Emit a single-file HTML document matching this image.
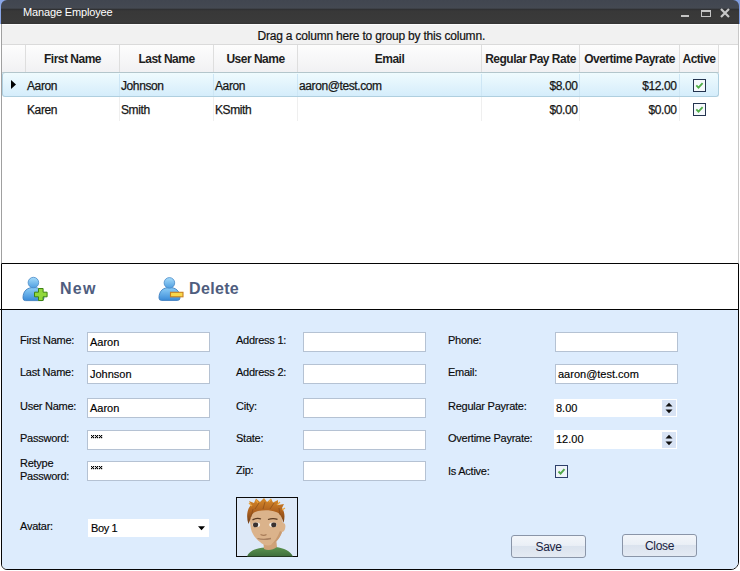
<!DOCTYPE html>
<html><head><meta charset="utf-8">
<style>
*{margin:0;padding:0;box-sizing:border-box}
html,body{width:740px;height:571px;overflow:hidden;background:#fff;font-family:"Liberation Sans",sans-serif}
.a{position:absolute}
.hdr{top:45px;height:28px;background:linear-gradient(#fdfdfd,#f1f1f3);border-right:1px solid #dedede;border-bottom:1px solid #c3cfd4;font-weight:bold;font-size:12px;color:#1e1e1e;text-align:center;line-height:28px;white-space:nowrap;letter-spacing:-0.5px}
.cell{height:24px;line-height:26px;font-size:12px;color:#161616;-webkit-text-stroke:0.25px #161616;white-space:nowrap;letter-spacing:-0.4px}
.vl{width:1px;background:#efefef}
.lbl{font-size:11px;color:#0a0a0a;-webkit-text-stroke:0.15px #0a0a0a;white-space:nowrap;letter-spacing:-0.25px;line-height:15px}
.tb{-webkit-text-stroke:0.15px #000;background:#fff;border:1px solid #b5c2d3;height:20px;width:123px;font-size:11px;color:#000;padding-left:2px;line-height:18px;white-space:nowrap}
.btn{border:1px solid #8a95a8;border-radius:3px;background:linear-gradient(#f3f6fa 0%,#eaeff6 45%,#dbe3ee 50%,#e4eaf3 100%);font-size:12px;text-align:center;line-height:22px;color:#1a2340;letter-spacing:-0.3px}
.tbt{font-size:16px;font-weight:bold;color:#4f5d7e;letter-spacing:0.9px;white-space:nowrap}
</style></head><body>

<!-- title bar -->
<div class="a" style="left:0;top:0;width:740px;height:1px;background:#52565e"></div>
<div class="a" style="left:0;top:0;width:62px;height:1px;background:#8fa8e0"></div>
<div class="a" style="left:62px;top:0;width:58px;height:1px;background:#b8bcc6"></div>
<div class="a" style="left:690px;top:0;width:50px;height:1px;background:#7a98dc"></div>
<div class="a" style="left:0;top:0;width:8px;height:24px;background:#8aa6e6"></div>
<div class="a" style="left:732px;top:0;width:8px;height:24px;background:#7f9de0"></div>
<div class="a" style="left:1px;top:0px;width:738px;height:24px;background:linear-gradient(#414650 0px,#444952 8px,#303133 9.5px,#383838 11px,#3a3a3a 22px,#333 24px);border-top-left-radius:6px;border-top-right-radius:6px"></div>
<div class="a" style="left:23px;top:6px;color:#fff;font-size:11px;white-space:nowrap;letter-spacing:-0.15px">Manage Employee</div>
<div class="a" style="left:681px;top:15px;width:8px;height:2px;background:#c4c4c4"></div>
<div class="a" style="left:701px;top:10px;width:10px;height:7px;border:1px solid #c4c4c4;border-top:2px solid #c4c4c4"></div>
<svg class="a" style="left:720px;top:8px" width="10" height="10" viewBox="0 0 10 10"><path d="M1 1L9 9M9 1L1 9" stroke="#c8c8c8" stroke-width="2.2"/></svg>

<!-- grid frame -->
<div class="a" style="left:1px;top:24px;width:1px;height:240px;background:#a0a0a0"></div>
<div class="a" style="left:738px;top:24px;width:1px;height:240px;background:#c8c8c8"></div>
<div class="a" style="left:2px;top:24px;width:736px;height:21px;background:#f1f1f1;border-top:1px solid #fcfcfc;border-bottom:1px solid #dadada"></div>
<div class="a" style="left:257.5px;top:29px;font-size:12px;color:#111;-webkit-text-stroke:0.2px #111;white-space:nowrap;letter-spacing:-0.2px">Drag a column here to group by this column.</div>

<!-- headers -->
<div class="a hdr" style="left:2px;width:24px"></div>
<div class="a hdr" style="left:26px;width:94px">First Name</div>
<div class="a hdr" style="left:120px;width:94px">Last Name</div>
<div class="a hdr" style="left:214px;width:84px">User Name</div>
<div class="a hdr" style="left:298px;width:184px">Email</div>
<div class="a hdr" style="left:482px;width:98px">Regular Pay Rate</div>
<div class="a hdr" style="left:580px;width:100px">Overtime Payrate</div>
<div class="a hdr" style="left:680px;width:39px">Active</div>

<!-- row lines -->
<div class="a vl" style="left:119px;top:97px;height:24px"></div>
<div class="a vl" style="left:213px;top:97px;height:24px"></div>
<div class="a vl" style="left:297px;top:97px;height:24px"></div>
<div class="a vl" style="left:481px;top:97px;height:24px"></div>
<div class="a vl" style="left:579px;top:97px;height:24px"></div>
<div class="a vl" style="left:679px;top:97px;height:24px"></div>

<!-- selected row -->
<div class="a" style="left:2px;top:72px;width:717px;height:25px;border:1px solid #afcfdf;border-top-color:#b3c6cc;border-radius:3px;background:linear-gradient(#effbfe,#d5edfb)"></div>
<div class="a" style="left:119px;top:74px;width:1px;height:22px;background:#cde6f5"></div>
<div class="a" style="left:213px;top:74px;width:1px;height:22px;background:#cde6f5"></div>
<div class="a" style="left:297px;top:74px;width:1px;height:22px;background:#cde6f5"></div>
<div class="a" style="left:481px;top:74px;width:1px;height:22px;background:#cde6f5"></div>
<div class="a" style="left:579px;top:74px;width:1px;height:22px;background:#cde6f5"></div>
<div class="a" style="left:679px;top:74px;width:1px;height:22px;background:#cde6f5"></div>
<svg class="a" style="left:11px;top:80px" width="6" height="10" viewBox="0 0 6 10"><path d="M0 0L5 4.5L0 9Z" fill="#000"/></svg>

<div class="a cell" style="left:27px;top:73px">Aaron</div>
<div class="a cell" style="left:121px;top:73px">Johnson</div>
<div class="a cell" style="left:215px;top:73px">Aaron</div>
<div class="a cell" style="left:299px;top:73px">aaron@test.com</div>
<div class="a cell" style="left:482px;top:73px;width:95.5px;text-align:right">$8.00</div>
<div class="a cell" style="left:580px;top:73px;width:96.5px;text-align:right">$12.00</div>

<div class="a cell" style="left:27px;top:97px">Karen</div>
<div class="a cell" style="left:121px;top:97px">Smith</div>
<div class="a cell" style="left:215px;top:97px">KSmith</div>
<div class="a cell" style="left:482px;top:97px;width:95.5px;text-align:right">$0.00</div>
<div class="a cell" style="left:580px;top:97px;width:96.5px;text-align:right">$0.00</div>

<svg class="a" style="left:693px;top:79px" width="13" height="13" viewBox="0 0 13 13"><rect x="0.5" y="0.5" width="12" height="12" fill="#f6f9fc" stroke="#24344f"/><path d="M3.3 6.4L5.5 8.6L9.6 4.2" stroke="#4fae46" stroke-width="1.8" fill="none"/></svg>
<svg class="a" style="left:693px;top:103px" width="13" height="13" viewBox="0 0 13 13"><rect x="0.5" y="0.5" width="12" height="12" fill="#f6f9fc" stroke="#24344f"/><path d="M3.3 6.4L5.5 8.6L9.6 4.2" stroke="#4fae46" stroke-width="1.8" fill="none"/></svg>

<!-- toolbar -->
<div class="a" style="left:1px;top:263px;width:738px;height:307px;border:1px solid #050505;border-bottom-left-radius:6px;border-bottom-right-radius:8px;border-top-left-radius:1px;border-top-right-radius:1px"></div>
<div class="a" style="left:0;top:309px;width:739px;height:1px;background:#050505"></div>

<svg class="a" style="left:20px;top:274px" width="30" height="30" viewBox="0 0 30 30">
  <defs>
    <linearGradient id="pb" x1="0" y1="0" x2="0" y2="1"><stop offset="0" stop-color="#8fd0f8"/><stop offset="1" stop-color="#3a8ad8"/></linearGradient>
    <linearGradient id="ph" x1="0" y1="0" x2="0" y2="1"><stop offset="0" stop-color="#a6dcfb"/><stop offset="1" stop-color="#4f9ee0"/></linearGradient>
  </defs>
  <path d="M3 24 C3 17 7 13.5 13.5 13.5 C20 13.5 24 17 24 24 Q24 26.6 21.5 26.6 H5.5 Q3 26.6 3 24Z" fill="url(#pb)" stroke="#3f7fc0" stroke-width="0.9"/>
  <circle cx="13.4" cy="8.6" r="5.3" fill="url(#ph)" stroke="#4a8ac8" stroke-width="0.8"/>
  <path d="M14.5 18.2h4v-3.7h4.6v3.7h4v4.6h-4v3.7h-4.6v-3.7h-4z" fill="#92d83c" stroke="#3f8412" stroke-width="1"/>
</svg>
<div class="a tbt" style="left:60px;top:280px;letter-spacing:1.3px">New</div>

<svg class="a" style="left:154px;top:274px" width="32" height="30" viewBox="0 0 32 30">
  <path d="M5 24 C5 17 9 13.5 15.5 13.5 C22 13.5 26 17 26 24 Q26 26.4 23.5 26.4 H7.5 Q5 26.4 5 24Z" fill="url(#pb)" stroke="#3f7fc0" stroke-width="0.9"/>
  <circle cx="15.4" cy="8.9" r="5.3" fill="url(#ph)" stroke="#4a8ac8" stroke-width="0.8"/>
  <rect x="16.5" y="18.3" width="12.5" height="4.5" fill="#f8d84c" stroke="#c8801e" stroke-width="1.1"/>
</svg>
<div class="a tbt" style="left:189px;top:280px;letter-spacing:0.35px">Delete</div>

<!-- form panel -->
<div class="a" style="left:2px;top:310px;width:736px;height:259px;background:#ddecfd;border-bottom-left-radius:5px;border-bottom-right-radius:7px"></div>

<div class="a lbl" style="left:20px;top:333px">First Name:</div>
<div class="a lbl" style="left:20px;top:365px">Last Name:</div>
<div class="a lbl" style="left:20px;top:399px">User Name:</div>
<div class="a lbl" style="left:20px;top:431px">Password:</div>
<div class="a lbl" style="left:20px;top:457px;line-height:13px">Retype<br>Password:</div>
<div class="a lbl" style="left:20px;top:519px">Avatar:</div>

<div class="a tb" style="left:87px;top:332px">Aaron</div>
<div class="a tb" style="left:87px;top:364px">Johnson</div>
<div class="a tb" style="left:87px;top:398px">Aaron</div>
<div class="a tb" style="left:87px;top:430px"></div>
<svg class="a" style="left:91px;top:435px" width="13" height="5" viewBox="0 0 13 5"><g fill="#000"><rect x="0" y="0" width="1.2" height="1.2"/><rect x="2" y="0" width="1.2" height="1.2"/><rect x="1" y="1" width="1.2" height="1.2"/><rect x="0" y="2" width="1.2" height="1.2"/><rect x="2" y="2" width="1.2" height="1.2"/><rect x="4" y="0" width="1.2" height="1.2"/><rect x="6" y="0" width="1.2" height="1.2"/><rect x="5" y="1" width="1.2" height="1.2"/><rect x="4" y="2" width="1.2" height="1.2"/><rect x="6" y="2" width="1.2" height="1.2"/><rect x="8" y="0" width="1.2" height="1.2"/><rect x="10" y="0" width="1.2" height="1.2"/><rect x="9" y="1" width="1.2" height="1.2"/><rect x="8" y="2" width="1.2" height="1.2"/><rect x="10" y="2" width="1.2" height="1.2"/></g></svg>
<div class="a tb" style="left:87px;top:461px"></div>
<svg class="a" style="left:91px;top:466px" width="13" height="5" viewBox="0 0 13 5"><g fill="#000"><rect x="0" y="0" width="1.2" height="1.2"/><rect x="2" y="0" width="1.2" height="1.2"/><rect x="1" y="1" width="1.2" height="1.2"/><rect x="0" y="2" width="1.2" height="1.2"/><rect x="2" y="2" width="1.2" height="1.2"/><rect x="4" y="0" width="1.2" height="1.2"/><rect x="6" y="0" width="1.2" height="1.2"/><rect x="5" y="1" width="1.2" height="1.2"/><rect x="4" y="2" width="1.2" height="1.2"/><rect x="6" y="2" width="1.2" height="1.2"/><rect x="8" y="0" width="1.2" height="1.2"/><rect x="10" y="0" width="1.2" height="1.2"/><rect x="9" y="1" width="1.2" height="1.2"/><rect x="8" y="2" width="1.2" height="1.2"/><rect x="10" y="2" width="1.2" height="1.2"/></g></svg>

<div class="a lbl" style="left:236px;top:333px">Address 1:</div>
<div class="a lbl" style="left:236px;top:365px">Address 2:</div>
<div class="a lbl" style="left:236px;top:399px">City:</div>
<div class="a lbl" style="left:236px;top:431px">State:</div>
<div class="a lbl" style="left:236px;top:463px">Zip:</div>
<div class="a tb" style="left:303px;top:332px"></div>
<div class="a tb" style="left:303px;top:364px"></div>
<div class="a tb" style="left:303px;top:398px"></div>
<div class="a tb" style="left:303px;top:430px"></div>
<div class="a tb" style="left:303px;top:461px"></div>

<div class="a lbl" style="left:448px;top:333px">Phone:</div>
<div class="a lbl" style="left:448px;top:365px">Email:</div>
<div class="a lbl" style="left:448px;top:399px">Regular Payrate:</div>
<div class="a lbl" style="left:448px;top:431px">Overtime Payrate:</div>
<div class="a lbl" style="left:448px;top:464px">Is Active:</div>
<div class="a tb" style="left:555px;top:332px"></div>
<div class="a tb" style="left:555px;top:364px">aaron@test.com</div>

<div class="a tb" style="left:554px;top:399px;border:none;height:18px;width:123px;line-height:18px">8.00</div>
<div class="a" style="left:662px;top:400px;width:14px;height:16px;background:#d8e3f4"></div>
<svg class="a" style="left:662px;top:400px" width="14" height="16" viewBox="0 0 14 16"><path d="M3.5 6.5L7 2.8L10.5 6.5Z M3.5 9.5L7 13.3L10.5 9.5Z" fill="#111"/></svg>
<div class="a tb" style="left:554px;top:430px;border:none;height:19px;width:123px;line-height:19px">12.00</div>
<div class="a" style="left:662px;top:432px;width:14px;height:16px;background:#d8e3f4"></div>
<svg class="a" style="left:662px;top:432px" width="14" height="16" viewBox="0 0 14 16"><path d="M3.5 6.5L7 2.8L10.5 6.5Z M3.5 9.5L7 13.3L10.5 9.5Z" fill="#111"/></svg>

<svg class="a" style="left:555px;top:465px" width="13" height="13" viewBox="0 0 13 13"><rect x="0.5" y="0.5" width="12" height="12" fill="#eef3f9" stroke="#2d3f6a"/><path d="M3.5 6.5L5.6 8.6L9.5 4.2" stroke="#52a84a" stroke-width="2" fill="none"/></svg>

<div class="a tb" style="left:88px;top:519px;border:none;width:121px;height:18px;line-height:18px;padding-left:3px;letter-spacing:-0.4px">Boy 1</div>
<svg class="a" style="left:197px;top:525px" width="9" height="6" viewBox="0 0 9 6"><path d="M1 1.2H8L4.5 5.2Z" fill="#000"/></svg>

<!-- avatar -->
<svg class="a" style="left:236px;top:497px" width="62" height="60" viewBox="0 0 62 60">
  <defs>
    <linearGradient id="hair" x1="0" y1="0" x2="0" y2="1"><stop offset="0" stop-color="#d88c2c"/><stop offset="0.5" stop-color="#b0621e"/><stop offset="1" stop-color="#6e3c16"/></linearGradient>
    <linearGradient id="shirt" x1="0" y1="0" x2="0" y2="1"><stop offset="0" stop-color="#5c9450"/><stop offset="1" stop-color="#3e6e3c"/></linearGradient>
  </defs>
  <rect x="0.5" y="0.5" width="61" height="59" fill="#dde9f8" stroke="#0a0a0a"/>
  <path d="M11 59.5 C13 54 20 51 29 50.5 L40 50 C48 51 54 54 57 59.5Z" fill="url(#shirt)"/>
  <path d="M27 42 L28 52 C32 54 37 53 41 50 L40 41Z" fill="#cfa278"/>
  <path d="M14 16 C15 11 21 10 30 10 C40 10 46 13 46 22 L47 26 C49 26 50 28 49 32 C48 35 46 35 46 35 C44 41 40 46 35 48 C31 49 27 48 24 45 C20 42 16 37 15 32 C14 27 13.5 20 14 16Z" fill="#dbb38b"/>
  <path d="M46 35 C44 41 40 46 35 48 C38 45 42 40 44 34Z" fill="#c89a70"/>
  <path d="M12.5 27 C10 20 11 12 15 8 L13 4 L18 6 L20 1.5 L24 5 L28 1 L31 5 L35 1.5 L37 5.5 L42 3 L42 8 L48 7 L46 11 C49 15 49 21 47.5 26 C46 20 44 16 40 15 C35 13 28 13 22 14 C17 15 15 18 14.5 22 Z" fill="url(#hair)"/>
  <path d="M16 9 L13 6 M22 6 L20 3 M33 5 L35 2 M41 8 L44 5 M46 13 L49 11" stroke="#eaa43a" stroke-width="1.2"/>
  <path d="M19 12 L23 6 M27 12 L29 5 M34 12 L38 6 M15 20 L17 12 M44 18 L43 11" stroke="#7a4418" stroke-width="1" opacity="0.55"/>
  <path d="M16.5 22.8 C19 21.5 22 21 25 22 M32 22.5 C35 21.5 38 21.3 41.5 22.3" stroke="#5a3a22" stroke-width="1.3" fill="none"/>
  <ellipse cx="20.3" cy="27.8" rx="3.8" ry="2.3" fill="#f4f0ea"/>
  <ellipse cx="37" cy="27.8" rx="3.8" ry="2.3" fill="#f4f0ea"/>
  <ellipse cx="19.6" cy="27.9" rx="2.6" ry="2.3" fill="#3a3230"/>
  <ellipse cx="37.8" cy="27.9" rx="2.6" ry="2.3" fill="#3a3230"/>
  <path d="M24.5 37.5 C26.5 38.5 29 38.5 30.5 37.5" stroke="#a87c58" stroke-width="1.1" fill="none"/>
  <path d="M21.5 41.5 C25 42.5 30 42.6 35 41.5" stroke="#a98060" stroke-width="1.3" fill="none"/>
</svg>

<div class="a btn" style="left:511px;top:535px;width:75px;height:23px">Save</div>
<div class="a btn" style="left:622px;top:534px;width:75px;height:23px">Close</div>

</body></html>
